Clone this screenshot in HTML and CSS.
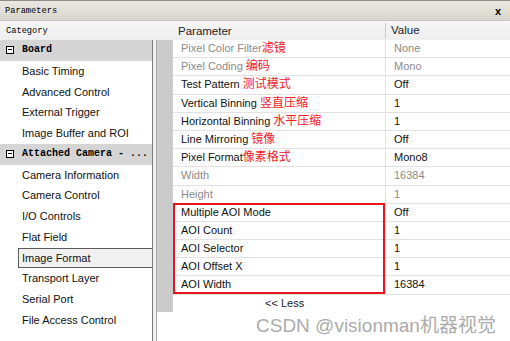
FILE: index.html
```html
<!DOCTYPE html>
<html>
  <head>
    <title>Parameters</title>
    <link rel="stylesheet" href="styles.css">
  </head>
  <body>
    <div class="window">
      <div class="titlebar">
        <span class="title">Parameters</span>
        <span class="close">x</span>
      </div>

      <div class="headers">
        <div class="head-category">Category</div>
        <div class="head-param">Parameter</div>
        <div class="head-value">Value</div>
      </div>

      <div class="main">
        <div class="tree">
          <div class="group"><span class="toggle"></span>Board</div>
          <div class="item">Basic Timing</div>
          <div class="item">Advanced Control</div>
          <div class="item">External Trigger</div>
          <div class="item">Image Buffer and ROI</div>
          <div class="group"><span class="toggle"></span>Attached Camera - ...</div>
          <div class="item">Camera Information</div>
          <div class="item">Camera Control</div>
          <div class="item">I/O Controls</div>
          <div class="item">Flat Field</div>
          <div class="item selected">Image Format</div>
          <div class="item">Transport Layer</div>
          <div class="item">Serial Port</div>
          <div class="item">File Access Control</div>
        </div>

        <div class="splitter"></div>

        <div class="pane">
          <div class="gutter"></div>
          <div class="grid-wrap">
            <div class="grid">
              <div class="row disabled"><div class="cell-param">Pixel Color Filter<span class="note">滤镜</span></div><div class="cell-value">None</div></div>
              <div class="row disabled"><div class="cell-param">Pixel Coding <span class="note">编码</span></div><div class="cell-value">Mono</div></div>
              <div class="row"><div class="cell-param">Test Pattern <span class="note">测试模式</span></div><div class="cell-value">Off</div></div>
              <div class="row"><div class="cell-param">Vertical Binning <span class="note">竖直压缩</span></div><div class="cell-value">1</div></div>
              <div class="row"><div class="cell-param">Horizontal Binning <span class="note">水平压缩</span></div><div class="cell-value">1</div></div>
              <div class="row"><div class="cell-param">Line Mirroring <span class="note">镜像</span></div><div class="cell-value">Off</div></div>
              <div class="row"><div class="cell-param">Pixel Format<span class="note">像素格式</span></div><div class="cell-value">Mono8</div></div>
              <div class="row disabled"><div class="cell-param">Width</div><div class="cell-value">16384</div></div>
              <div class="row disabled"><div class="cell-param">Height</div><div class="cell-value">1</div></div>
              <div class="row"><div class="cell-param">Multiple AOI Mode</div><div class="cell-value">Off</div></div>
              <div class="row"><div class="cell-param">AOI Count</div><div class="cell-value">1</div></div>
              <div class="row"><div class="cell-param">AOI Selector</div><div class="cell-value">1</div></div>
              <div class="row"><div class="cell-param">AOI Offset X</div><div class="cell-value">1</div></div>
              <div class="row"><div class="cell-param">AOI Width</div><div class="cell-value">16384</div></div>
              <div class="highlight"></div>
            </div>
            <div class="less">&lt;&lt; Less</div>
          </div>
        </div>
      </div>

      <div class="watermark">CSDN @visionman机器视觉</div>
    </div>
  </body>
</html>
```

FILE: styles.css
```css
body {
  margin: 0;
  background-color: white;
  font-family: "Liberation Sans", Arial, sans-serif;
  font-size: 11px;
  color: #111;
}

.window {
  position: relative;
  width: 510px;
  height: 341px;
  overflow: hidden;
}

.titlebar {
  height: 19px;
  border-top: 1px solid #8c8c8c;
  background: linear-gradient(#ebe8e1, #d8d5cd);
  display: flex;
  align-items: center;
  justify-content: space-between;
  padding: 0 9px 0 5px;
}

.title {
  font-family: "Liberation Mono", monospace;
  font-size: 8.7px;
  color: #000;
}

.close {
  font-weight: bold;
  font-size: 11px;
  color: #000;
}

.headers {
  height: 19px;
  border-top: 1px solid #c8c6c0;
  background: linear-gradient(#f6f6f6, #eeeeee);
  display: flex;
  align-items: center;
}

.head-category {
  width: 167px;
  padding-left: 6px;
  font-family: "Liberation Mono", monospace;
  font-size: 8.7px;
  color: #000;
}

.head-param {
  width: 207px;
  padding-left: 5px;
  font-size: 11.5px;
  color: #222;
}

.head-value {
  height: 15px;
  line-height: 15px;
  border-left: 1px solid #c8c8c8;
  padding-left: 5px;
  font-size: 11.5px;
  color: #222;
}

.main {
  display: flex;
  height: 301px;
}

.tree {
  width: 152px;
  border-right: 1px solid #7a7a7a;
  background-color: white;
}

.group {
  height: 20.75px;
  line-height: 20.75px;
  padding-left: 22px;
  position: relative;
  background-color: #d5d5d5;
  font-family: "Liberation Mono", monospace;
  font-weight: bold;
  font-size: 10px;
  color: #000;
}

.toggle {
  position: absolute;
  left: 6px;
  top: 6px;
  width: 6px;
  height: 6px;
  border: 1px solid #000;
  background-color: white;
}

.toggle::after {
  content: "";
  position: absolute;
  left: 1px;
  top: 2px;
  width: 4px;
  height: 1px;
  background-color: #000;
}

.item {
  height: 20.75px;
  line-height: 19px;
  padding-left: 22px;
  box-sizing: border-box;
  padding-top: 1px;
}

.item.selected {
  margin-left: 18px;
  padding-left: 3px;
  padding-top: 0;
  border: 1px solid #5a5a5a;
  border-right: none;
  background-color: #f0f0f0;
}

.splitter {
  width: 3px;
  background-color: #f0f0f0;
  border-right: 1px solid #a8a8a8;
}

.pane {
  flex: 1;
  display: flex;
  align-items: flex-start;
}

.gutter {
  width: 16px;
  height: 272px;
  background-color: #cbcbcb;
}

.grid-wrap {
  flex: 1;
}

.grid {
  position: relative;
}

.row {
  display: flex;
  height: 18.2px;
  line-height: 17.2px;
  box-sizing: border-box;
  border-bottom: 1px solid #e2e2e2;
}

.cell-param {
  width: 212px;
  padding-left: 8px;
  box-sizing: border-box;
  white-space: nowrap;
}

.cell-value {
  flex: 1;
  padding-left: 8px;
  border-left: 1px solid #e2e2e2;
}

.row.disabled {
  color: #8a8a8a;
}

.note {
  font-family: "Noto Sans CJK SC", sans-serif;
  font-size: 12px;
  line-height: 1;
  color: #f0202a;
}

.highlight {
  position: absolute;
  left: 0;
  top: 163px;
  width: 212px;
  height: 91px;
  box-sizing: border-box;
  border: 2px solid #e8141e;
}

.less {
  height: 17px;
  line-height: 17px;
  padding-left: 92px;
  font-size: 11px;
  color: #222;
}

.watermark {
  position: absolute;
  left: 256px;
  top: 310px;
  font-family: "Liberation Sans", "Noto Sans CJK SC", sans-serif;
  font-size: 19px;
  color: #ababab;
}
```
